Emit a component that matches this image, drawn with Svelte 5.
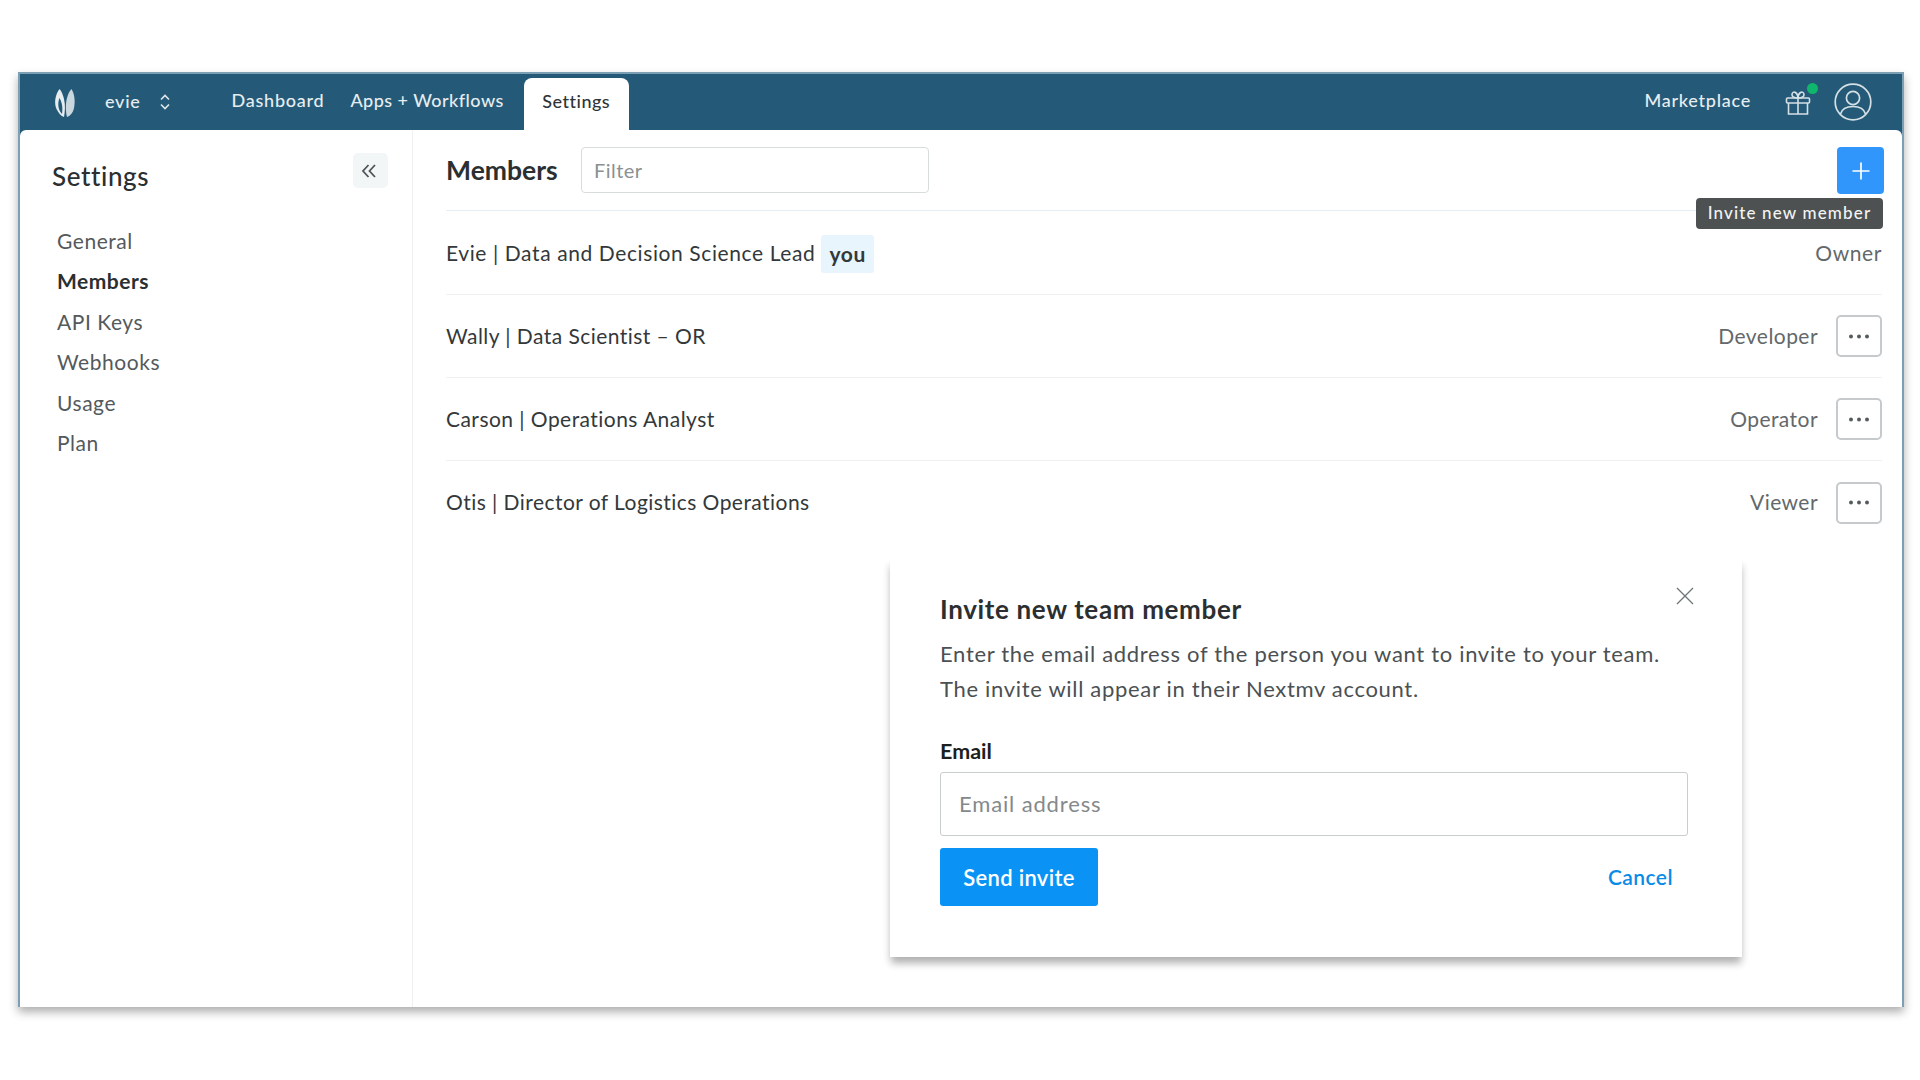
<script lang="ts">
  const navItems = ['General', 'Members', 'API Keys', 'Webhooks', 'Usage', 'Plan'];
  const members = [
    { name: 'Evie | Data and Decision Science Lead', role: 'Owner', you: true },
    { name: 'Wally | Data Scientist – OR', role: 'Developer', you: false },
    { name: 'Carson | Operations Analyst', role: 'Operator', you: false },
    { name: 'Otis | Director of Logistics Operations', role: 'Viewer', you: false },
  ];
</script>

<div class="page">
  <div class="window">
    <header class="topbar">
      <svg class="logo" width="22" height="30" viewBox="0 0 22 30" aria-hidden="true">
        <path d="M5.5 1 C1 7 0 15 2.5 21 C4.5 25 7 28 10 29 C11 24 11.5 17 10 11 C9 7 7.5 3 5.5 1 Z M5.5 10 C8.5 15 8.8 21 8 26 C4 22 3.4 15 5.5 10 Z" fill="#e6edf0" fill-rule="evenodd"/>
        <path d="M17.5 1 C20.5 6 21.5 13 20 20 C19 25 16 28 13 29 C11.5 23 11.5 15 13 10 C14 6 15.5 3 17.5 1 Z" fill="#c9d7de"/>
      </svg>
      <span class="org">evie</span>
      <svg class="updown" width="12" height="18" viewBox="0 0 12 18" fill="none" stroke="#dfe7eb" stroke-width="1.6" aria-hidden="true">
        <path d="M2 6.5 L6 2.5 L10 6.5"/><path d="M2 11.5 L6 15.5 L10 11.5"/>
      </svg>
      <nav class="topnav">
        <span>Dashboard</span>
        <span class="apps">Apps + Workflows</span>
        <span class="tab">Settings</span>
      </nav>
      <span class="market">Marketplace</span>
      <span class="gift">
        <svg width="26" height="26" viewBox="0 0 26 26" fill="none" stroke="#d5e0e5" stroke-width="1.6" aria-hidden="true">
          <rect x="1.5" y="8" width="23" height="5" rx="1"/>
          <path d="M3.5 13 V24 H22.5 V13"/>
          <path d="M13 8 V24"/>
          <path d="M13 8 C10 8 7 7 7 4.5 C7 2.5 9 1.5 10.5 2.5 C12 3.5 13 6 13 8 C13 6 14 3.5 15.5 2.5 C17 1.5 19 2.5 19 4.5 C19 7 16 8 13 8 Z"/>
        </svg>
        <i class="dot"></i>
      </span>
      <svg class="avatar" width="38" height="38" viewBox="0 0 38 38" fill="none" stroke="#d5e0e5" stroke-width="1.7" aria-hidden="true">
        <circle cx="19" cy="19" r="17.8"/>
        <circle cx="19" cy="15" r="6.6"/>
        <path d="M6.5 31 C8 25.5 12.5 23.5 19 23.5 C25.5 23.5 30 25.5 31.5 31"/>
      </svg>
    </header>

    <div class="body">
      <aside class="sidebar">
        <div class="side-head">
          <h2>Settings</h2>
          <button class="collapse" aria-label="Collapse">
            <svg width="16" height="16" viewBox="0 0 16 16" fill="none" stroke="#4f5557" stroke-width="1.8" aria-hidden="true">
              <path d="M7.5 2 L2 8 L7.5 14"/><path d="M14 2 L8.5 8 L14 14"/>
            </svg>
          </button>
        </div>
        <ul class="side-nav">
          {#each navItems as item}
            <li class:active={item === 'Members'}>{item}</li>
          {/each}
        </ul>
      </aside>

      <main class="main">
        <div class="main-head">
          <h1>Members</h1>
          <div class="filter">Filter</div>
          <button class="add" aria-label="Invite new member">
            <svg width="20" height="20" viewBox="0 0 20 20" stroke="#fff" stroke-width="1.7" aria-hidden="true">
              <path d="M10 1.5 V18.5 M1.5 10 H18.5"/>
            </svg>
          </button>
          <div class="tooltip">Invite new member</div>
        </div>

        <div class="rows">
          {#each members as m}
            <div class="row">
              <span class="name">{m.name}</span>
              {#if m.you}<span class="you">you</span>{/if}
              <span class="role">{m.role}</span>
              {#if !m.you}
                <button class="more" aria-label="More">
                  <svg width="22" height="5" viewBox="0 0 22 5" fill="#555c5e" aria-hidden="true">
                    <circle cx="3" cy="2.5" r="2"/><circle cx="11" cy="2.5" r="2"/><circle cx="19" cy="2.5" r="2"/>
                  </svg>
                </button>
              {/if}
            </div>
          {/each}
        </div>

        <section class="modal">
          <svg class="close" width="18" height="18" viewBox="0 0 18 18" stroke="#6f7578" stroke-width="1.3" aria-hidden="true">
            <path d="M1 1 L17 17 M17 1 L1 17"/>
          </svg>
          <h3>Invite new team member</h3>
          <p>Enter the email address of the person you want to invite to your team.<br />The invite will appear in their Nextmv account.</p>
          <div class="label">Email</div>
          <div class="email">Email address</div>
          <div class="actions">
            <button class="send">Send invite</button>
            <span class="cancel">Cancel</span>
          </div>
        </section>
      </main>
    </div>
  </div>
</div>

<style>
  :global(body) {
    margin: 0;
    background: #fff;
    font-family: Lato, "Liberation Sans", sans-serif;
  }

  .page {
    width: 1920px;
    height: 1080px;
    padding: 72px 0 0 18px;
    box-sizing: border-box;
    overflow: hidden;
  }

  .window {
    width: 1886px;
    height: 935px;
    box-sizing: border-box;
    display: flex;
    flex-direction: column;
    background: #245a78;
    border: 2px solid #7d9fb3;
    border-bottom: none;
    box-shadow: 0 5px 9px rgba(0, 0, 0, 0.32);
  }

  .topbar {
    height: 56px;
    flex: none;
    display: flex;
    align-items: center;
    color: #e6edf0;
    font-size: 18px;
    font-weight: 500;
    letter-spacing: 0.75px;
    padding-left: 34px;
  }

  .logo { margin-top: 2px; }
  .org { margin-left: 29px; margin-top: -3px; }
  .updown { margin-left: 18px; }

  .topnav {
    display: flex;
    align-items: flex-end;
    align-self: flex-end;
    margin-left: 61px;
    height: 52px;
  }

  .topnav span:not(.tab) {
    margin-right: 26px;
    align-self: center;
    margin-top: -9px;
  }

  .topnav .apps { letter-spacing: 0.45px; }

  .tab {
    height: 52px;
    width: 105px;
    margin-left: -6px;
    box-sizing: border-box;
    background: #fff;
    color: #2f3436;
    border-radius: 8px 8px 0 0;
    display: flex;
    align-items: center;
    justify-content: center;
    padding-bottom: 7px;
    letter-spacing: 0.5px;
  }

  .market { margin-left: auto; margin-top: -5px; }

  .gift {
    position: relative;
    margin-left: 34px;
    height: 26px;
    margin-top: 1px;
  }

  .dot {
    position: absolute;
    right: -7px;
    top: -7px;
    width: 11px;
    height: 11px;
    border-radius: 50%;
    background: #0fb66c;
  }

  .avatar { margin-left: 23px; margin-right: 30px; }

  .body {
    flex: 1;
    display: flex;
    background: #fff;
    border-radius: 6px 6px 0 0;
    min-height: 0;
  }

  .sidebar {
    width: 393px;
    flex: none;
    box-sizing: border-box;
    border-right: 1px solid #eef0f2;
    padding: 23px 24px 0 32px;
  }

  .side-head {
    display: flex;
    justify-content: space-between;
    align-items: flex-start;
  }

  .side-head h2 {
    margin: 8px 0 0;
    font-size: 26px;
    font-weight: 500;
    color: #2b2f31;
    line-height: 30px;
    letter-spacing: 0.6px;
  }

  .collapse {
    width: 35px;
    height: 35px;
    border: none;
    padding: 0 3px 0 0;
    border-radius: 5px;
    background: #f2f6f7;
    display: flex;
    align-items: center;
    justify-content: center;
  }

  .side-nav {
    list-style: none;
    margin: 30px 0 0;
    padding: 0 0 0 5px;
    font-size: 21px;
    color: #54595b;
  }

  .side-nav li {
    height: 40.4px;
    line-height: 40.4px;
    letter-spacing: 0.55px;
  }

  .side-nav .active {
    color: #2b2f31;
    font-weight: 700;
    letter-spacing: 0.5px;
  }

  .main {
    position: relative;
    flex: 1;
    min-width: 0;
    padding: 0 20px 0 33px;
    font-size: 21px;
    color: #33383a;
    letter-spacing: 0.45px;
  }

  .main-head {
    position: relative;
    height: 81px;
    display: flex;
    align-items: flex-start;
    padding-top: 17px;
    box-sizing: border-box;
    border-bottom: 1px solid #e6edf2;
  }

  .main-head h1 {
    margin: 0;
    font-size: 26.5px;
    font-weight: 700;
    color: #2b2f31;
    line-height: 46px;
    width: 135px;
    letter-spacing: 0;
  }

  .filter {
    width: 348px;
    height: 46px;
    box-sizing: border-box;
    border: 1px solid #d9dcdd;
    border-radius: 4px;
    padding-left: 12px;
    line-height: 44px;
    font-size: 20px;
    color: #8b9092;
  }

  .add {
    margin-left: auto;
    margin-right: -2px;
    width: 47px;
    height: 47px;
    border: none;
    padding: 0;
    border-radius: 4px;
    background: #3096fb;
    display: flex;
    align-items: center;
    justify-content: center;
  }

  .tooltip {
    position: absolute;
    right: -1px;
    top: 68px;
    width: 187px;
    height: 31px;
    background: #4d5152;
    color: #f3f4f4;
    border-radius: 4px;
    font-size: 17px;
    font-weight: 500;
    letter-spacing: 1.15px;
    line-height: 30px;
    text-align: center;
  }

  .row {
    height: 83px;
    box-sizing: border-box;
    display: flex;
    align-items: center;
    border-bottom: 1px solid #eef0f2;
  }

  .row:first-child { height: 84px; letter-spacing: 0.6px; }
  .row:last-child { border-bottom: none; }
  .row:not(:first-child) span { margin-top: -2px; }

  .you {
    margin-left: 6px;
    padding: 0 8px;
    height: 38px;
    line-height: 38px;
    background: #e8f5fc;
    border-radius: 3px;
    font-weight: 700;
    margin-top: 2px;
  }

  .role {
    margin-left: auto;
    color: #63686a;
  }

  .more {
    margin-left: 18px;
    width: 46px;
    height: 42px;
    box-sizing: border-box;
    border: 2px solid #c6cacc;
    border-radius: 5px;
    background: #fff;
    padding: 0;
    display: flex;
    align-items: center;
    justify-content: center;
  }

  .modal {
    position: absolute;
    left: 477px;
    top: 428px;
    width: 852px;
    height: 399px;
    box-sizing: border-box;
    background: #fff;
    padding: 34px 54px 0 50px;
    box-shadow: 0 7px 8px -1px rgba(0, 0, 0, 0.32);
  }

  .close {
    position: absolute;
    right: 48px;
    top: 29px;
  }

  .modal h3 {
    margin: 0;
    font-size: 26px;
    font-weight: 700;
    line-height: 34px;
    color: #2b2f31;
    letter-spacing: 0.65px;
  }

  .modal p {
    margin: 10px 0 0;
    font-size: 22px;
    line-height: 35px;
    color: #4b5052;
    letter-spacing: 0.68px;
  }

  .label {
    margin-top: 31px;
    font-size: 21.5px;
    font-weight: 700;
    line-height: 28px;
    color: #1c1f20;
    letter-spacing: 0;
  }

  .email {
    margin-top: 7px;
    height: 64px;
    box-sizing: border-box;
    border: 1px solid #c9cdce;
    border-radius: 3px;
    padding-left: 18px;
    line-height: 62px;
    font-size: 22px;
    color: #84898b;
    letter-spacing: 0.85px;
  }

  .actions {
    margin-top: 12px;
    display: flex;
    align-items: center;
    justify-content: space-between;
    padding-right: 15px;
  }

  .send {
    width: 158px;
    height: 58px;
    border: none;
    border-radius: 3px;
    background: #0a93f5;
    color: #fff;
    font: 600 22px Lato, "Liberation Sans", sans-serif;
    letter-spacing: 0.3px;
    padding: 0;
  }

  .cancel {
    color: #0a8be8;
    font-size: 21px;
    font-weight: 600;
    margin-top: -2px;
  }
</style>
